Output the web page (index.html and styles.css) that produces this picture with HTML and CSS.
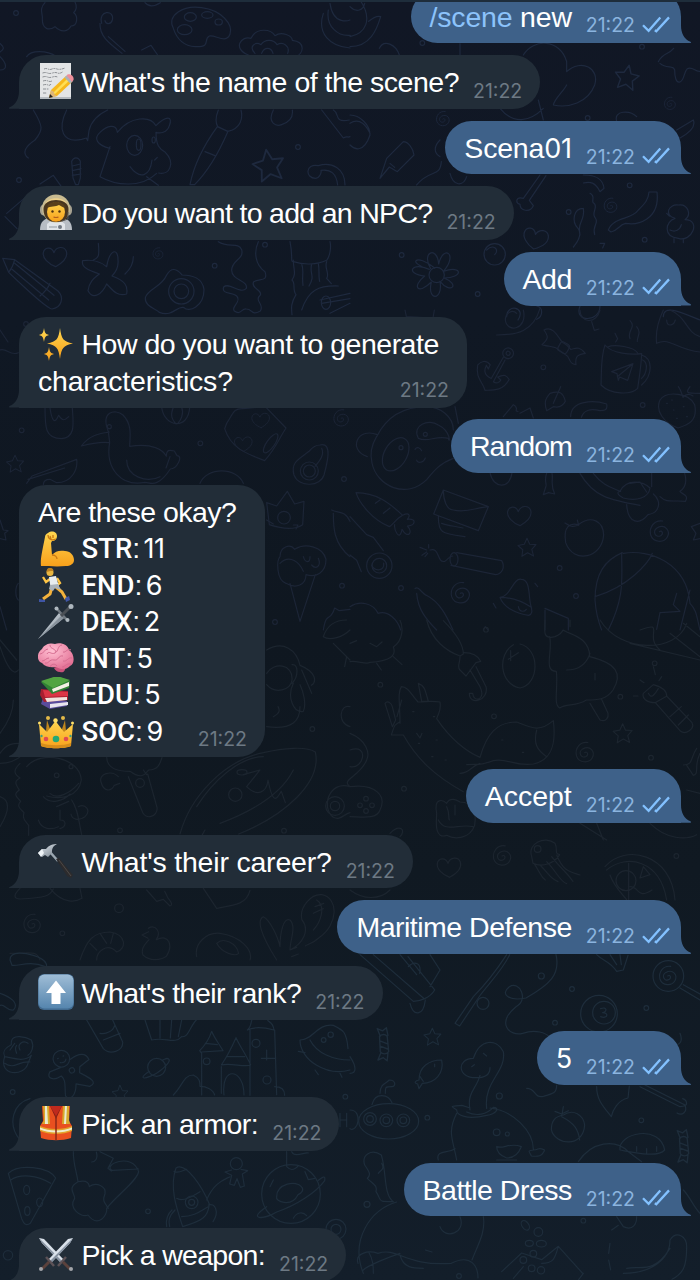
FILE: index.html
```html
<!DOCTYPE html>
<html lang="en">
<head>
<meta charset="utf-8">
<title>Chat</title>
<link rel="stylesheet" href="styles.css">
</head>
<body>
<svg class="wallpaper" viewBox="0 0 700 1280" aria-hidden="true">
  <defs>
    <path id="heart" d="M2 28C-20 20-38 2-35-14c3-16 24-20 32 0C4-34 28-34 34-18 40 2 20 18 2 28Z"/>
    <path id="star" d="M0-30 9-10 30-9 16 7 22 29 2 18-17 30-14 8-30-6-9-10Z"/>
    <path id="swirl" d="M-2 0c8-6 14 6 4 12-16 8-26-14-10-24C16-24 32-2 22 16 12 34-20 34-28 10-34-14-16-36 8-32"/>
    <circle id="dot" r="7"/>
    <path id="candy" d="M-10-22c8-6 14-6 20 0l4 40c-6 8-16 8-22 0ZM-8-22l-8-20 14 6 10-8 4 20M-6 20l-8 20 14-6 10 8 2-20M-9-10 11-2M-8 4 13 12"/>
  </defs>
  <g class="ink ink-top" transform="scale(.33333)">
    <path d="M135 8c-20 20-5 35-8 50 0 30 20 35 38 22 20 20 40 14 48-2 20 0 22-30 8-40 12-12 8-24 4-32M305 70c-12-40 40-42 32-10-4 14-20 14-22 2M300 70c-2 40 30 62 66 90M325 110l50 44"/>
    <path d="M520 85c-20-40 30-70 85-62 60 8 95 50 85 80-12 30-45 0-62 5-20 10 8 34-42 32-34-2-56-24-66-55Z"/><ellipse cx="571" cy="51" rx="18" ry="13"/><ellipse cx="622" cy="45" rx="17" ry="10"/><ellipse cx="554" cy="89" rx="22" ry="15"/><ellipse cx="656" cy="66" rx="11" ry="9"/>
    <path d="M745 165c-50-20-20-60 8-50 16-34 60-28 72-8 20-14 52 0 52 14 40 4 36 40 8 50M765 160c-20-20 0-36 18-26 12-18 38-16 48 0 18-10 40 4 32 26M785 160c8-20 28-20 34 0M425 150l28-14 22 32M80 170c12-20 60-20 90 0M970 40c-20 60 20 100 80 104M985 30c-8 50 30 80 66 76M990 10c10 70 60 50 60 50M435 8c12 14 30 10 46 0"/>
    <path d="M100 330c30 50 30 60 5 90-30 20-40 40-20 54M200 330c-30 60-10 100 45 88l14-4 4 8 4-30c8-34 30-50 56-62"/>
    <path d="M330 445c-40-10-50-30-30-48 20-20 50-28 52 0 40-50 100-50 116-20 30-30 52-30 40 0-6 22-30 24-40 20 0 40 10 50 28 60 30 30 14 70-20 62M330 440l-30 90M300 530c50 28 124 34 170-10M390 500c30 40 60 30 66-20M440 530l35 26M464 480l8-8"/><ellipse cx="404" cy="436" rx="24" ry="30"/><ellipse cx="416" cy="434" rx="7" ry="17"/><ellipse cx="461" cy="420" rx="5" ry="9"/>
    <path d="M655 330c-8 20-10 36-2 50l30 14c40-8 46-40 40-64M652 380l32 14c-30 70-60 120-100 160h-14c14-70 50-130 82-174M615 455l30 12M820 330c-20 40 10 50 25 44 30-10 34-30 32-44M965 330l65 84c14-8 10 0 20-4M1000 330c20 10 0 40 48 30M0 130c16 14 10 20 0 26M0 170c20 20 24 40 0 40"/>
    <use href="#star" transform="translate(805 495) scale(1.55) rotate(-8)"/><path d="M1035 555c0-50-40-70-80-58-40-8-40 38-8 38 12 0 18-18 16-24 30-4 46 10 50 44M120 552l40-26 30 42M20 640l70-60M15 650l36 36"/>
    <path d="M215 484c6-14 20-14 26 0v50l-6 20h-8l-8-20zM217 498l24-6M217 512l26-6M217 526l26-4"/>
    <path d="M8 775l36 4 130 94c20 20 10 50-18 54-16 0-130-110-130-110Zm36 4c-4 20-10 28-18 38M44 790l118 96M36 808 146 900M150 850c-8 20-20 30-30 38"/>
    <use href="#heart" transform="translate(165 772)"/><use href="#swirl" transform="translate(475 761) scale(.55)"/>
    <path d="M295 730c4 40 0 44-15 50M400 770c0 20-12 40-25 52M320 800c8-50 34-60 34-20 2 20-8 38-18 48 40 14 48 30 44 54-30 8-40-10-60-30-14 30-40 50-56 20 4-30 22-40 34-50-30-10-56-20-50-40 30-4 50 0 72 18Z"/>
    <path d="M500 825c14-24 30-20 46 0 30 0 62 10 66 44 0 50-46 70-60 54-20-8-34 30-74 14-10-12-44-16-42-44 8-28 48-30 64-68Z"/><circle cx="544" cy="874" r="38"/><circle cx="544" cy="874" r="22"/>
    <path d="M655 725c30 20 60 0 70 24 8 30-30 30-30 62 0 30 50 30 44 54-18 20-50-20-68-4-8 24 30 14 40 28 14 20-20 30-8 44 20 14 20-8 36-6 20 0 14 22 42 6 14-20-20-30 0-48 8-14-30-20-20-40 20-10 44 0 34-30-30-20-34-60-20-90M870 725c10 50 0 60 10 60 30 10 70 10 100-4 10-12 14-40 10-56M880 780c0 30 10 40-4 60 12 10 0 30 12 44-16 26-14 40-12 60M980 785c-8 20 10 36 0 50l14 16M905 792c8 20 0 34 4 64M935 792c-8 30 12 34-8 66M955 790c4 20 0 40 4 54M905 930c20-60 50-74 110-72M960 900l90-20M965 910l85-14M990 940l60-30"/><ellipse cx="978" cy="908" rx="14" ry="20"/>
    <use href="#dot" x="48" y="39"/><use href="#dot" x="57" y="540"/><use href="#dot" x="894" y="441"/><use href="#dot" x="795" y="734"/><use href="#dot" x="644" y="797"/>
  </g>
  <g class="ink ink-top" transform="translate(350) scale(.33333)">
    <path d="M30 0c40 60 16 100-30 110M0 20c20 20 40 10 44-10M0 140c60 0 80-50 92-90-10-4-24 4-36 14M88 145c14-30 50-10 60 20M330 165v-34M520 165c30-50 110-50 130 20v30c44-40 100-10 84 40-20 54-80 70-124 60 4-20 30-40 40-60M565 300l15 60M450 325c40 50 90 40 130 0M860 350c-20-20-70-20-60 14M980 390l50-30c8 20-14 40-40 54M925 185c14-28 30-20 46-40M930 190c20 18 40 4 44 20 0 20 4 40 16 36 14-6 10-28 22-40 16-8 22 10 38 8"/>
    <use href="#star" transform="translate(830 231) scale(1.2) rotate(12)"/><use href="#swirl" transform="translate(961 311) scale(.6)"/><use href="#swirl" transform="translate(280 357) scale(.7)"/>
    <path d="M90 535l20-60 50-50c14 0 30 20 32 40l-50 50-24-14ZM120 490l14 12M0 345c30 0 60 30 60 60-20 60-50 40-60 30M0 370c30-20 50 10 60 30M270 420c-20 20-18 40 0 50M200 555c40-50 70-20 74-70M570 525l-50 70c-24-6-24 14-10 18 0 20 30 26 40 4l-12-16 50-74M300 520c10 40 40 40 50 10"/>
    <path d="M700 525c50 0 60 20 62 40l-12 10c-14-30-30-30-50-26M720 580c20 10 0 24 12 30 14 10-10 30 4 44 12 16-10 20-2 50M700 625c-30 0-36 40-16 60 14 18-4 44-14 56M700 625c6 40-20 40-10 80M775 690c14-40 70-30 90-60 20-20 30-30 32-54h24c10 84-60 100-94 94-20 4-20 20-44 26Z"/>
    <use href="#swirl" transform="translate(783 617) scale(.7)"/><use href="#heart" transform="translate(556 718) rotate(14) scale(1.05)"/><circle cx="434" cy="763" r="32"/><path d="M410 750c20-20 40 0 24 14"/>
    <path d="M985 615c30-4 40 30 20 44 50 0 20 70-20 56-46-4-40-50-10-60-34-8-20-44 10-40ZM950 640l8 8M960 690c16 8 30 0 34-16M972 716v12M1000 716v12"/>
    <circle cx="260" cy="825" r="23"/><path d="M242 806c-30-50 20-70 24-14 14-60 60-30 14 22 60-20 60 20 2 20 50 20 20 50-12 10 10 60-40 60-26 2-40 40-60 14-20-18-60-6-40-44 14-20-70-20-40-50 16-4 38 12 42 28ZM215 950c-4-30-20-60-60-66 0 30 20 50 56 60 8-20 50-40 70-26-20 26-50 30-70 28M248 892c0 20-20 30-26 50M0 900c40-10 60-40 80-40 20 4 16-20 50-14-10 40-60 30-80 60l-50 14M0 740c14 0 10 50-4 70M30 780l30-14-20 66M0 725h35"/>
    <path d="M470 950c0-40 60-30 34 10M560 918c20 4 20 30 0 40M690 918c-20 50 60 50 60 0M940 950c0-40 60-10 110 10M750 730h14l-6 14"/>
    <use href="#dot" x="217" y="129"/><use href="#dot" x="876" y="140"/><use href="#dot" x="713" y="354"/><use href="#dot" x="884" y="719"/><use href="#dot" x="155" y="765"/><use href="#dot" x="383" y="882"/><use href="#dot" x="656" y="636"/><use href="#dot" x="839" y="556"/>
  </g>
  <g class="ink ink-upper" transform="translate(0 310) scale(.33333)">
    <path d="M135 292c0 60 0 94 50 94 44-4 34-50 32-92M150 294c6 40 14 50 26 22 14 20 18 14 30 4M485 292c8 60 80 70 84 0M520 292c-12 30 0 40 8 50M545 292c8 20-4 40-10 46"/>
    <path d="M325 365c-24-60 20-70 44-50 30 30 20 70 20 94 70-10 100 10 110 30 0-20 10-20 24-16l8 14c20 0 0 40-20 40-40 60-60 40-76 40-70 14-120-40-106-120ZM328 366c-30 4-60 10-84 42 30-8 60-14 84-10M380 450c0 50 60 70 100 50M510 440l-12 34"/><circle cx="328" cy="350" r="6"/>
    <path d="M80 520l16-22 134-50c4 30-14 70-60 70l-20-10c-20 0-20 14-20 16M84 508l110-34M680 340c20-30 20-46 50-44l66-6 62 64c-20 30-30 60-64 98-50-20-100-34-120-96Z"/><use href="#heart" transform="translate(782 332) scale(.75)"/><use href="#heart" transform="translate(730 403) scale(.75)"/><ellipse cx="812" cy="400" rx="12" ry="34" transform="rotate(35 812 400)"/>
    <use href="#swirl" transform="translate(1025 325) scale(.8)"/><use href="#star" transform="translate(45 461) scale(.85)"/>
    <path d="M960 405c40-10 20 60 12 90-10 34-74 40-90 0-12-40 20-50 46-72 10-12 20-18 32-18ZM965 415c10 20-8 40-20 54"/><circle cx="928" cy="483" r="27"/><circle cx="928" cy="483" r="18"/>
    <path d="M600 520c20-50 110-50 130 0M800 578l30 10 32-44 22 38 28-8-4 70c-30 20-70 10-100 0Z"/><circle cx="852" cy="623" r="19"/><path d="M880 645h14l-6 12M800 630l20 12"/>
    <path d="M840 740c0-30 30-40 44-22 30-20 84-10 94 30 0 40-30 56-60 46 0 30-30 44-60 26-30-10-28-70-18-80ZM870 820l30 114 46-140M840 760c30-30 60 0 70 24M910 740c6 20 20 20 20 0M935 765c12 14 30 4 20-20"/>
    <path d="M0 120c20-8 30 20 55 8M0 60l24 36M0 630l10 30 14 2-10 8 4 20-18-4M0 890l20 70M55 820c-10 10-10 40 0 50M995 600c20 10 40 0 55 34M1000 610c0 40 0 90 50 130M970 960c10-60 20-20 34-66l14 8 32-4"/><use href="#dot" x="65" y="361"/><use href="#dot" x="601" y="400"/><use href="#dot" x="1032" y="507"/><use href="#dot" x="1026" y="827"/><use href="#dot" x="825" y="936"/><use href="#dot" x="78" y="42"/>
  </g>
  <g class="ink ink-upper" transform="translate(350 310) scale(.33333)">
    <path d="M440 75c60 0 110-10 130-80M520 0c14 60-50 70-54 30 0-20 20-34 34-20M165 0l4 20 80 4 4-24M690 0c0 40 50 44 60 0M725 35l8 26 14-4M940 0c-14 30-24 70-20 100 40-20 60 20 130 26M950 30c0 20 20 20 26 0M960 0c50 20 50 70 90 80"/>
    <path d="M636 96c-14-20-30-50-54-36 14 20 14 26-6 44 30 10 34 0 54 18l14 10c20 10 10 30 34 32-4-30 10-30 28-34-20-24-30-14-44-12-10-14-14-14-26-22Z"/><rect x="626" y="98" width="30" height="30" rx="8" transform="rotate(30 641 113)"/>
    <g transform="translate(440 180) rotate(25)"><circle cx="10" cy="-60" r="16"/><circle cx="10" cy="-60" r="6"/><path d="M2-44-4 30c-30 0-30-20-30-30l10 8v-14c-20-10-30 4-34 16 10 40 36 40 52 60 20-10 50-20 52-60-12-8-20-10-34 8l12 4c0 10-8 16-18 14l4-74"/></g>
    <path d="M765 105c-14 40-10 90-12 120 30 30 90 30 110 10 4-30 10-60 12-104-30 4-90 0-110-26Zm8 6c20-10 80 0 90 18M875 135c34 10 34 60 0 90M878 150c20 10 10 44-4 56M785 185l64-24-16 50-24-10-4 10-4-20ZM802 200l46-38M795 70l8 16-6 10M840 32c20 20-10 30 0 54M860 50c16 20 0 30 2 44"/>
    <path d="M930 270c20-30 90-20 104 14 10 50-20 60-50 70-40-14-70-50-54-84ZM985 230c8 10 10 20 14 32 8-10 20-10 30-4M1020 230c-14 20-10 20 30 20"/><path d="M950 280h2M970 300h2M1000 290h2M980 325h2M1010 320h2M965 270h2"/>
    <path d="M600 250c30-10 40 0 46 24-8 16-20 20-36 16l-20 12c-10-30 0-40 10-52ZM610 280l22-50M662 320c0-50 70-50 108-38 4 20-8 20-20 20-30-8-50 0-56 20M460 320l30-36c20 10 0 20 14 20M510 310l30-16 10 30"/>
    <path d="M80 380c30-60 80-90 150-90 40 0 80 30 80 70M325 340l-10-50M310 445c-40 14-60 40-80 64-60 60-150 20-164-50-10-40 8-70 14-80M52 440c-60-20-30-90 30-66"/><ellipse cx="137" cy="433" rx="34" ry="54" transform="rotate(30 137 433)"/><path d="M205 385c-20-40 30-60 60-40 40 20 34 60 30 40-40-10-60 14-90 0ZM200 450c0 10 20 10 26-6M195 418c6-10 16-4 20 4"/><circle cx="153" cy="413" r="6"/><circle cx="226" cy="373" r="6"/>
    <path d="M18 548c60 0 100 30 140 68-20 10-30 30-40 34-50-20-90-70-100-102ZM158 616c20-10 24 0 14 12 30-4 24 20 0 20 20 20 0 40-16 10-8 40-24 0-22-14M90 570l-14 10M100 610l20-16"/>
    <path d="M280 540l135 50-30 72-134-50ZM280 540c0 30 10 60 30 60 40 10 70-8 105-10M265 620c0 50 10 50 80 60M275 640c20 8 40 8 64 14M420 488c10 50 60 50 66 0M590 490c-8 20 0 30-2 38l-8 26 16-6 18 4c-14-30-4-40-8-62"/>
    <path d="M690 490c40 70 90 80 180 96M730 490c30 40 60 44 80 54 20-40 70-30 90-10-4 30-40 40-80 30-20-10-20-20-8-20M840 520l30-4 20 30M905 530v-40M830 584c4 60 40 60 64 30 0 0 20-4 26-14 14-20 0-40-10-48M930 560c20 20 40 10 76 14 12-20-10-20-16-30 20-14 20-34 14-54"/>
    <use href="#heart" transform="translate(508 619)"/><use href="#star" transform="translate(531 712) scale(.9)"/><use href="#swirl" transform="translate(930 665)"/><use href="#swirl" transform="translate(333 850)"/>
    <path d="M685 644c40-30 74-10 76 30-4 70-90 90-114 24-8-50 14-60 38-54ZM685 645c-20 10-30 0-40-6M682 630l4 16"/>
    <path d="M320 728l135 24c12 20 0 40-18 42l-134-28M210 712l20 8M216 736l14-10M236 704v10M225 740l8-10M240 720c30-10 20 40 44 34 10-4 10-14 24-16"/><ellipse cx="312" cy="748" rx="12" ry="20"/>
    <circle cx="88" cy="767" r="38"/><path d="M0 735l20 16 14 34M0 620l50 54 20 8 30 40M65 765c8 20 40 20 36-6"/><circle cx="88" cy="767" r="22"/>
    <path d="M450 862c30 0 40-60 64-54 30 0 20 60 30 84M450 862c10 30 50 50 86 54 12-4 10-14 8-24-30-20-60-30-94-30ZM505 890c4 20 20 14 24 8M430 880l8 14M555 820l8 10"/>
    <path d="M820 730c80-14 190 30 200 150M735 870c0-80 30-120 82-142M735 860c100-30 160-100 172-130M735 870c2 30 8 60 20 90M815 728c0 80 10 130-40 232M1020 880c20 20 20 40 30 80M980 850l-10 34 20 20-60 4-10 50M1020 840l-30 120M585 895l70 30v35M585 900v60M195 836c10-10 20 14 34 20 40 20 60 60 80 104M200 850c4 50 30 80 60 110M0 890c30-20 70-10 84 20 30-10 60 20 68 50M400 960l6-10 8 10"/>
    <use href="#dot" x="580" y="172"/><use href="#dot" x="878" y="285"/><use href="#dot" x="629" y="774"/><use href="#dot" x="678" y="858"/><use href="#dot" x="153" y="834"/><path d="M1050 640l-26 10 14 20-8 20 20-4"/>
  </g>
  <g class="ink ink-lower" transform="translate(0 620) scale(.33333)">
    <path d="M970 50c10-30 30-50 70-50M970 50c20 14 60 0 80-20M1000 70l50 50M1040 110l-6 30M800 90c50-30 90 0 100 46 50 20 50 50 34 60M800 160c20-34 80-30 76 20-4 30-50 44-76 14M876 190c20-20 20-60 0-56M880 190c-20 40 0 90 30 84 10-20 0-60-10-80M905 150l30 70M800 320c80 10 100-20 100-60M820 290c20-10 20-20 14-30M1050 260c-30-10-40 50 0 60M0 80c20 60 40 90 55 70M0 60l50 60M40 240c0 30-10 60-40 100M0 400c20-30 40-30 60-30M0 430c30 0 50-10 66-24M0 530c30 10 30 40 0 90"/>
    <path d="M60 430c-20 20-20 30 0 44-20 10-12 20-2 36-20 14-8 20 4 34-14 14 0 24 10 34-6 20 6 26 14 38v30M80 440c40-50 160-30 164 40-8 50-60 60-104 48M150 520c20 20 60 0 86-30M130 530c20 24 60 14 80-8M215 540c20 30 20 60 30 104M170 560l36-16M235 560c20-10 40 10 20 30-20 14-40 8-42-8M115 600c10 30 40 30 60 20M180 570v30c20 0 20 20 0 26"/><circle cx="170" cy="466" r="7"/><circle cx="213" cy="440" r="6"/>
    <path d="M320 410c0 40 40 44 70 44 40 30 50 0 56-4 30 0 34-20 40-38M355 470c-20-20-60-10-52 16 8 30 30 30 40 10l16-6M385 470l40 100c10 34 50 20 46-8l-28-100M430 450l10 14"/><circle cx="420" cy="489" r="13"/>
    <path d="M540 642c30-110 130-220 250-244 60-14 130-20 156-2 20 90-90 190-230 246M590 560c50-80 130-150 200-150M660 610c80-30 180-80 220-160M740 500l40-50-50 14M740 500c30 30 60 20 64-20 12 60 20 70 40 34l12 34M615 630l-8 14"/><circle cx="706" cy="524" r="20"/><ellipse cx="726" cy="457" rx="15" ry="8"/>
    <path d="M1050 500c-60-20-90 60-50 92 20 10 30-8 50-14"/><circle cx="1005" cy="558" r="28"/><circle cx="1005" cy="558" r="14"/>
    <path d="M60 805c-20 20-20 30 0 32 80-4 90-10 100-30M150 805c40 50 80 40 96 30l-6-30M440 810l30 34 20-6 20 20c10-4 4-10-6-24l-10-20M610 805l40 60c60-10 90-14 100-54"/>
    <use href="#swirl" transform="translate(98 912) scale(.9)"/><circle cx="357" cy="865" r="13"/><use href="#dot" x="187" y="940"/><use href="#dot" x="360" y="631"/><use href="#dot" x="852" y="632"/><use href="#dot" x="937" y="327"/>
    <path d="M240 1020c20-60 40-84 90-84 50 8 50 50 20 60-30-30-60 0-60 24M300 940l20 30M340 940l-8 30M270 970l20 20M445 925c20-14 40 10 24 34 40-20 50 20 30 50-20 14-50 14-70-4-8-20 8-34 18-46M446 935l-20 10 18 10M590 1010c-8-40 30-74 70-70 60 8 100 50 90 80M650 970c20-20 60 0 66 30-10 10-50 0-66-30M830 1020c-50-80-60-120-40-130 20 10 44 60 50 90M840 980c0-40 10-90 30-80 20 20 0 60 0 90 40-20 60-60 36-90-10-40 30-80 60-76 50 10 50 90-10 130-20 20-40 20-40 24M950 840c30 20 10 70-10 90M945 860l26-10M940 880l30-14M870 990l20-8M875 1010l20-8M30 1000c60 0 80-10 90 20"/>
  </g>
  <g class="ink ink-lower" transform="translate(350 620) scale(.33333)">
    <path d="M0 125c20-4 50 10 60 2 60-4 80-20 70-46 30-20 30-60 20-80M60 70l20 10 16-14M0 70l20-8M80 130l14 20M130 110l26 24M230 0c14 60 60 94 100 108l10-6c0-30-30-70-60-100M330 110c0 20-10 30 0 40l18 18 30-40 14-4c-10-20-30-26-50-26M360 150l30 50c20 40-20 50-22 20h-10c0 40 60 20 50-20l-30-60M510 72c60 14 60 120 0 132-60-10-70-100-20-130M475 118l30-20M482 92v30"/>
    <path d="M585 0c0 30-10 60 30 50 10-4 20-10 24-20 20 14 80 20 80 80 80 20 100 50 70 100-20 30-50 30-80 30-30 20-60 10-80 24-20-10-4-60-10-110-40 0-10-60-20-104M660 0v20M650 150c40 0 60-20 70-50M720 250l30 50c20 8 26-10 24-20l-20-44M735 160v20"/>
    <path d="M750 0c60 100 230 100 260 10M840 70l210 50M870 30c80-30 10 20 60 60M960 40l90 70M1000 10l50 40M880 220l30-26c30 8 40 20 40 34l76 80c10 20-20 36-34 26l-76-86c-30 0-40-16-36-28ZM915 248l36-20M960 290l34-30M985 315l30-30M895 220c10 20 20 0 30-14M910 140l6 24M870 180l12 8M850 228h14M935 170l-8 12"/>
    <path d="M150 310c0-60-8-90 4-110 20 0 30 24 50 46 10 0 40-4 66 0 4 30-4 30-10 50 40 60 90 100 130 116 20-70 50-106 110-106 50 20 70 30 110-4 10 80-10 120-60 130-60 8-80-20-120-10-40 14-40 10-80 12M124 345c10-30 8-30 26-40M124 345l36 0c40 70 90 120 180 170M105 250c8-10 20 0 22 10l10 40-10 20ZM205 190c20 8 20 20 30 54h-20ZM200 340l10 14 6-14M155 240l-14 50M560 330c-10 40 0 60 30 80M330 460c30 0 30-20 60-30"/><path d="M188 275h4M250 290h4M258 360h4M205 370h4M285 420h4M455 360h4M517 397h4M245 410h4"/>
    <use href="#star" transform="translate(818 340) scale(.95)"/><use href="#swirl" transform="translate(706 398) scale(.95)"/><use href="#swirl" transform="translate(458 708) scale(.95)"/><use href="#heart" transform="translate(297 744)"/>
    <path d="M0 340c50 20 60 60 50 80-20 50-80 60-50 80 80-10 110 30 90 70-10 30-60 20-90 20M0 390c60-20 40 60 0 50"/><circle cx="48" cy="536" r="7"/><circle cx="30" cy="556" r="7"/><circle cx="48" cy="573" r="7"/><circle cx="66" cy="556" r="7"/>
    <path d="M260 580c-10-50 20-40 30-30 10-20 30-10 40-4 40 0 50 30 44 70-14 40-60 44-84 30-40 14-30-50-30-66ZM265 600c20 40 60 10 104 20M290 560c10 20 4 30 8 40M315 555v30M120 640c30-30 50-10 30 10M0 810c40 30 90 30 120 0"/>
    <path d="M545 710c-14-40 40-64 70-40 10 20-4 30 14 34-14 24-50 40-80 26ZM552 730c20 30 20 40 34 50M570 735c30 30 30 40 54 50M590 725c30 30 40 60 60 66M605 710c30 40 40 40 64 74M620 705c20 50 40 50 70 60"/><circle cx="563" cy="687" r="10"/>
    <path d="M765 740c60-70 200-40 210 100M770 750c60-50 160-30 180 90M780 765c10 30 30 50 50 74M836 730v110M880 740l-10 34 30-10ZM840 800c30 0 20 40 66 10M690 610l80 50M740 610l20 50M900 610c50 50 110 50 140 34M1000 435c30 0 20-20 40-50M1050 400c-20 40 0 60-20 66l-20-30M1010 510l40 10"/><circle cx="828" cy="782" r="30"/>
    <use href="#dot" x="408" y="29"/><use href="#dot" x="91" y="194"/><use href="#dot" x="432" y="289"/><use href="#dot" x="903" y="413"/><use href="#dot" x="162" y="506"/><use href="#dot" x="979" y="708"/><use href="#dot" x="811" y="230"/><use href="#dot" x="914" y="130"/>
  </g>
  <g class="ink ink-bottom" transform="translate(0 950) scale(.33333)">
    <path d="M30 30c0-30 50-20 70-14 50 14 40 40 36 34-50-20-80 0-100-4ZM0 130c30 10 60 30 40 50-20 4-26-20-40-14M260 210l50 86c20 20 60 8 58-20l-30-66M300 250c20 4 40-8 44-24M310 270l50-20M435 210l20 60c40-10 70 14 90-10 20 4 24-30 44-50M480 210v54M515 210l-4 54M545 210l-10 50"/>
    <path d="M14 320c-20 60 60 60 70 20l10-24c-20 20-50 10-80 4ZM14 320c-10-20 8-30 20-36-4-40 50-20 60-14 10 20 0 40-10 46M30 300l14-20M60 300c-10-20 10-30 24-20M50 310c-4-10-4-20 0-24M14 340c30 20 40-8 76-4"/>
    <g transform="translate(214 362) rotate(-25)"><circle cx="-12" cy="-45" r="25"/><path d="M-26-22-60-24c-20 14 0 30 26 26 8 20-4 30-14 60 8 20 30 10 44-20l34 24c30 0 10-24-10-50l8-16 34-8c0-24-20-30-50-24M-22-50h2M-4-50h2M-20-36c8 6 16 4 20-2"/><circle cx="2" cy="0" r="8"/></g>
    <circle cx="470" cy="352" r="27"/><path d="M448 364c-30 20-20 24 0 16 30-10 60-40 60-50-4-8-10-4-20 0"/>
    <path d="M605 435V310l-6-8c20-20 30-40 36-58 8 20 20 34 34 58l-64 4M616 280l36 4M664 350v80M664 345c20-30 30-50 44-82 14 30 30 50 44 82-20 8-60-8-88 0ZM680 320h54M742 240c20-10 50-8 80 0-4-30-20-20-20-34M742 240c14-10 10-30 16-34M750 240v196M824 240l6 194M672 435c-10-90 60-80 60 0M520 435c30-30 30-60 60-60 20 10 20 20 20 34 20 0 40 10 44 26M824 410c20 0 30 10 30 26M784 325h40M800 300v30"/><circle cx="620" cy="334" r="10"/><circle cx="768" cy="280" r="12"/><circle cx="801" cy="390" r="12"/>
    <path d="M900 270c40 0 50-50 100-44 30 14 40 20 44 70M900 270c0 60 80 110 150 90M930 270c20 40 70 60 120 60M895 304l20 4M945 360l10 14M1020 370l6 12"/><circle cx="992" cy="254" r="8"/><circle cx="971" cy="270" r="7"/>
    <use href="#star" transform="translate(360 430) scale(.8)"/><path d="M60 570c-40-50-20-110 30-124M1020 490v40M1040 490v40M1020 510h20"/>
    <path d="M25 670c30-30 120-20 142 14l-76 136c-14 10-20 0-26-14ZM32 690c30-20 80-14 120 10"/><ellipse cx="80" cy="720" rx="9" ry="14"/><ellipse cx="119" cy="757" rx="9" ry="13"/><ellipse cx="82" cy="783" rx="8" ry="13"/>
    <path d="M220 605c0 40 10 60 14 90-34 20-10 34-10 50-20 30 20 60 40 50 30 40 60 0 56-20 30-40 90-80 96-110-20-60-110-20-80-4l80-4M235 695c40-8 30 20 34 14 20-14 50 0 46 22-8 20-4 24 10 44M275 636c10 0 20-10 14-30M300 605l40 20-16 30 10 8"/>
    <path d="M548 830c-20-60-40-120-20-176 30-20 80 60 100 108-4 40-20 50-80 68ZM522 664c10 8 30-4 38-6M530 745c20 14 60-14 70-20M545 800c40 0 60-20 80-30M525 780c-20 20-20 34-16 50M500 830c-4-20 4-40 16-50M625 765c20-8 34 20 14 50M620 750c20-50 50-60 70-70"/><circle cx="575" cy="757" r="19"/><circle cx="575" cy="757" r="9"/><circle cx="709" cy="641" r="18"/><path d="M695 660l-20 6 20 10-6 26 14 4 8-20 10 26 12-4-6-36 16-10-20-4"/>
    <circle cx="873" cy="732" r="88"/><path d="M830 740c0-40 60-50 74-30 10 10 0 20-10 24-20 40-70 20-64 6ZM800 770c-60 40-10 40 30 16 60-20 120-60 144-94 4-20-10-8-20 0M860 650c10 10 20 14 36-4M820 690l-10 20M915 665l10 24 20-4M880 805c10-20 30-20 40-8M860 648V605M875 605c10 20 40 0 50 4"/>
    <circle cx="24" cy="916" r="14"/><circle cx="1008" cy="838" r="30"/><circle cx="1008" cy="838" r="15"/><use href="#dot" x="38" y="426"/><use href="#dot" x="444" y="784"/><use href="#dot" x="1036" y="440"/>
  </g>
  <g class="ink ink-bottom" transform="translate(350 950) scale(.33333)">
    <path d="M30 14l160 140c20 0 50-10 64-34l-80-100M70 14l150 130M180 160c10 40 40 40 46-10M150 14l50 60M240 14l30 46-30 50M175 50c20-20 40-10 34 20M470 14C440 60 400 110 370 140L315 220l14 8 60-90c30-40 70-80 90-124"/><circle cx="399" cy="160" r="18"/>
    <path d="M618 14c14 60-20 90-90 130-50 10-80-10-50-34 30-20 60 40 20 60-60 50-20 90 20 80 40-14 70 0 80 10"/><circle cx="574" cy="78" r="9"/><path d="M740 14c20 20 40 20 60 50l20-4 14-44M780 14l20 30M810 14l4 30"/><use href="#swirl" transform="translate(955 78) scale(.9)"/><circle cx="955" cy="78" r="46"/><path d="M990 114l60 36M1000 104l50 28"/>
    <circle cx="747" cy="191" r="55"/><circle cx="762" cy="188" r="34"/><path d="M752 176c20-8 20 10 6 12 20 0 14 20-6 12"/>
    <use href="#candy" transform="translate(100 284) scale(1.15)"/><use href="#candy" transform="translate(1000 590) scale(1.15)"/><use href="#star" transform="translate(247 260) scale(.85)"/>
    <path d="M275 330c8 40-20 70-58 70l-10 16-4-14c-14-4-6-10 4-12 0-40 30-60 68-60ZM210 380l10 14M254 342v8"/>
    <path d="M370 325c20-60 70-60 90-20 10 60-60 90-50 170M390 376c-10 40-40 50-30 104M370 325c-50 0-50 60 10 58 30 0 40-14 40-30M320 480c-20-14-20-10 16-14l24 8M350 486c30 14 60 8 80-14 20 0 10 20-20 24-60 14-90 0-90-16M320 490c-30 60-10 80 0 140M420 474c70 8 130 70 130 124M265 630c-10-30 30-20 50-34M550 600c20 0 10-10 34 0-8 20-20 20-40 18-10-20-10-14 6-18ZM440 590c20 8 40-14 74 0-8 20-20 34-44 34-20-8-30-20-30-34ZM440 630h60"/><circle cx="440" cy="547" r="10"/><circle cx="472" cy="552" r="6"/><path d="M400 310l10 8M365 350l8-6"/>
    <ellipse cx="116" cy="514" rx="90" ry="53"/><circle cx="60" cy="507" r="19"/><circle cx="109" cy="511" r="19"/><circle cx="160" cy="511" r="19"/><circle cx="60" cy="507" r="10"/><circle cx="109" cy="511" r="10"/><circle cx="160" cy="511" r="10"/><path d="M66 464c10-40 50-30 60-6M90 430c0-30 20-30 28-40 20 0 20 20 8 20-20 0-20 0-20 20M0 480c40 0 24 70 0 56M0 370c20 0 20-20 0-50"/>
    <path d="M130 755c-30-20-20-90-36-140-30-20-60 0-50 30 14 20 20 30 8 40 20 20 30 20 26 40 20 30 0 30 52 30ZM95 640c10 20-4 20-10 30M40 970c-40-100 20-190 100-214M24 940c-10-30 30-40 60-30 60-20 80 40 220 30 60-30 80 10 80 44M40 960c14-14 80-40 110-50M70 970c0-20 0-40-14-64M400 800c8 50-20 90-34 130M270 830c14 40 80 20 60-30M220 955c-30 0-60 0-70-40M226 900l20 6"/>
    <path d="M640 495c30-20 60 0 64 30-4 70-90 60-100 14 0-30 14-40 36-44ZM635 500c40 20 50 40 54 70M640 470l-4 24M615 484l20 8 20-10M870 410l120 60c30 0 20-20 8-24M885 405l120 60c8 20-8 34-24 24M740 410c0 40 20 60 44 90 4-20 20-50 50-56l4-36M530 415c30 0 20 30 50 24 30-8 40-10 40-34M810 600c-8-50 120-80 134 0-20 24-90 8-134 0ZM860 590v14M890 596v14M920 590v14M685 635c40-60 110-70 150-30l40 30M970 290c20-8 30-14 20-40"/>
    <path d="M455 965l60-56 60 20 50-40 72 80M520 950l-30 35M575 940c40 0 40-20 50-50M700 970l-30 40"/><circle cx="565" cy="846" r="13"/><ellipse cx="526" cy="826" rx="10" ry="16" transform="rotate(-35 526 826)"/><ellipse cx="538" cy="880" rx="12" ry="9"/><ellipse cx="574" cy="881" rx="15" ry="10"/><circle cx="550" cy="911" r="10"/><circle cx="520" cy="930" r="10"/><circle cx="545" cy="955" r="10"/><circle cx="573" cy="961" r="11"/>
    <path d="M820 970c80 0 140-40 140-100 20-30 50-10 50 20 0 60-10 80-44 98M830 955c40-10 80 20 130-60M780 880l-4 30M776 930l6 30M785 840l20-14M800 800l20 30c30 14 40-10 40-30M1000 720c20 20 30 50 50 70"/>
    <circle cx="51" cy="763" r="9"/><use href="#dot" x="666" y="117"/><use href="#dot" x="889" y="174"/><use href="#dot" x="615" y="218"/><circle cx="448" cy="438" r="9"/><use href="#dot" x="232" y="503"/><use href="#dot" x="874" y="511"/><use href="#dot" x="700" y="812"/><use href="#dot" x="327" y="978"/>
  </g>
</svg>

<svg class="defs" aria-hidden="true">
  <defs>
    <linearGradient id="yel" x1="0" y1="0" x2="0" y2="1"><stop offset="0" stop-color="#ffd650"/><stop offset="1" stop-color="#f7a01b"/></linearGradient>
    <linearGradient id="steel" x1="0" y1="0" x2="1" y2="1"><stop offset="0" stop-color="#e4ebf1"/><stop offset="1" stop-color="#76818c"/></linearGradient>
    <linearGradient id="btn" x1="0" y1="0" x2="0" y2="1"><stop offset="0" stop-color="#9fbdd6"/><stop offset="1" stop-color="#5585ae"/></linearGradient>
    <radialGradient id="pink" cx=".4" cy=".3" r=".8"><stop offset="0" stop-color="#ffbfd2"/><stop offset="1" stop-color="#e0688e"/></radialGradient>
    <symbol id="checks" viewBox="0 0 28 17"><path d="M1 9.300 6.600 14.800 18.300 1.400M12.800 14.300 14.300 15.300 27 1.400"/></symbol>
  </defs>
</svg>

<main class="chat">
  <div class="bubble out"><p class="text loose"><span class="command">/scene</span> new</p><span class="time">21:22</span><svg class="checks"><use href="#checks"/></svg></div>

  <div class="bubble in">
    <svg class="emoji" viewBox="0 0 36 36"><path d="M2 0h31v36H2z" fill="#e3e5e6"/><path d="M2 34h31v2H2z" fill="#b5bbc0"/><g fill="none" stroke="#777b80" stroke-width=".8" stroke-dasharray="3 .8 1.5 .6"><path d="M6 6q2-1 4 0t4 0 5 0 8-1M4.500 10q3-1 5 0t5 0 5 0 5-1M4.500 14q3-1 5 0t5 0 5 0M5 18q3-1 5 0t4 0M5 22q3-1 5 0t3-1M5 26h6M5 30h4"/></g><path d="m11 35 2-8L28 13l6 6-15 14Z" fill="#f6b81d"/><path d="m15 30 15-15 2 2-15 14Z" fill="#ffdf55"/><path d="m11 35 2-8 2.500 1.500 1 3 2.500 1.500Z" fill="#ddb67a"/><path d="m11 35 1-4 3 3Z" fill="#222"/><path d="m26.500 14.500 2.500-2.300 5.700 6-2.500 2.200Z" fill="#aab2b8"/><path d="M28.500 12.500c2-3 8 0 7 4.500l-1.500 2Z" fill="#ee8f9a"/></svg>
    <p class="text">What's the name of the scene?</p><span class="time">21:22</span></div>

  <div class="bubble out"><p class="text loose">Scena<span class="digits">01</span></p><span class="time">21:22</span><svg class="checks"><use href="#checks"/></svg></div>

  <div class="bubble in">
    <svg class="emoji" viewBox="0 0 36 36"><path d="M2 36c0-9 5-12 11-12h10c7 0 11 4 11 12Z" fill="#b7bdc4"/><path d="M9 36v-6l5-4h8l5 4v6Z" fill="#e0e4e8"/><rect x="2" y="10" width="32" height="12" rx="5" fill="#a7a291"/><circle cx="18" cy="14.500" r="14" fill="#c8bb91"/><path d="M7 11C8 2 28 2 29 11Z" fill="#ecd08b"/><path d="M5.500 15c0-12 25-12 25 0s-6 13-12.500 13S5.500 25 5.500 15Z" fill="#49361f"/><ellipse cx="18" cy="18" rx="9" ry="9.800" fill="url(#yel)"/><path d="M9 14c0-8 18-8 18 0-3-1-4-2-6-3-3 2-9 1-12 3Z" fill="#59401b"/><circle cx="14.500" cy="17.500" r="1.200" fill="#50330f"/><circle cx="21.500" cy="17.500" r="1.200" fill="#50330f"/><path d="M15.500 23q2.500 1 5 0" stroke="#b2601d" stroke-width="1.200" fill="none"/><path d="M30 18v7l-6 2" stroke="#555" fill="none"/><circle cx="22" cy="33" r="2" fill="#707881"/><path d="M11 33h8" stroke="#9199a0"/></svg>
    <p class="text tight">Do you want to add an NPC?</p><span class="time">21:22</span></div>

  <div class="bubble out"><p class="text">Add</p><span class="time">21:22</span><svg class="checks"><use href="#checks"/></svg></div>

  <div class="bubble in stacked question">
    <p class="text"><svg class="emoji inline" viewBox="0 0 36 36"><g fill="url(#yel)"><path d="M22 1c1.500 11 3 13.500 13 15.500C25 18.500 23.500 21 22 32c-1.500-11-3-13.500-13-15.500C19 14.500 20.500 12 22 1Z"/><path d="M6 1c.8 5 1.500 6 5 7-3.500 1-4.200 2-5 7-.8-5-1.500-6-5-7 3.500-1 4.200-2 5-7ZM11 20c.8 5 1.500 6 5 7-3.500 1-4.200 2-5 7-.8-5-1.500-6-5-7 3.500-1 4.200-2 5-7Z"/></g></svg>How do you want to generate<br><span class="loose">characteristics?</span></p><span class="time">21:22</span></div>

  <div class="bubble out"><p class="text tighter">Random</p><span class="time">21:22</span><svg class="checks"><use href="#checks"/></svg></div>

  <div class="bubble in stacked stats">
    <div class="text">
      <p>Are these okay?</p>
      <p><svg class="emoji inline" viewBox="0 0 36 36"><path d="M10 2c4-3 9-1 9 3 0 3-2 5-5 5l-1 2 1 12c3-4 8-5 13-4 5 0 9 4 9 9 0 4-4 6-8 6-9 1-18 0-25 0-1-7 2-18 4-29 0-2 1-3 3-4Z" fill="url(#yel)"/><path d="M10 4c0 4 3 6 8 4M12 5l1 3M15 4v3M14 24c3 0 5 2 5 4" stroke="#c97812" stroke-width="1.300" fill="none"/></svg><b>STR</b>: <span class="digits">11</span></p>
      <p><svg class="emoji inline" viewBox="0 0 36 36"><path d="m14 19-2 7-7 5M18 19l6 5 4 7" stroke="#f4b23c" stroke-width="3" fill="none" stroke-linejoin="round"/><path d="M12 11 8 14 5 9M19 10l3 5-4 3" stroke="#ffc545" stroke-width="2.300" fill="none"/><path d="m11 9 7-1 3 11-8 2-1-5Z" fill="#e9edf0"/><path d="m12 17 8-1 3 6-6-2-2 3-4-2Z" fill="#aab2bb"/><circle cx="12" cy="4.500" r="3.500" fill="#eab63f"/><path d="M8.500 4c0-6 7-5 7-1l-3 0Z" fill="#bd8120"/><path d="m1 31 6 1v2H1ZM27 30l4-2 1 4-4 2Z" fill="#3f55a5"/></svg><b>END</b>: <span class="digits">6</span></p>
      <p><svg class="emoji inline" viewBox="0 0 36 36"><path d="M0 35 21 9l5 5Z" fill="url(#steel)"/><path d="m0 35 23.500-23.500L26 14Z" fill="#87919b"/><path d="m19 5 10 11" stroke="#727a82" stroke-width="2.500"/><path d="m23 12 9-9" stroke="#4a4f55" stroke-width="3"/><g fill="#aeb7be"><circle cx="33" cy="2.500" r="2.500"/><circle cx="18.500" cy="4.500" r="2"/><circle cx="29.500" cy="16" r="2"/></g></svg><b>DEX</b>: <span class="digits">2</span></p>
      <p><svg class="emoji inline" viewBox="0 0 36 36"><path d="M18 26h9c1 4-2 6-5 5-3 0-5-2-6-4Z" fill="#c8527a"/><path d="M4 22C-2 20-1 11 4 8 7 2 14 2 17 3c6-2 13 1 14 6 6 4 6 14 1 16-5 5-10 3-14 1-5 1-11 0-14-4Z" fill="url(#pink)"/><path d="M4 20c3 0 4-3 7-3m-9-4c4 0 4-5 8-5m2-4c0 4 5 3 6 7m6-7c-5 1-3 6-7 8s-6-3-8 1m-2 9c4 1 4-4 9-3s4-5 9-4m8-6c-4-2-5 3-8 2m9 6c-4-1-5 4-9 3m-1 6c3 0 4-4 9-3m-14 2c-2-3-6-2-7 1" stroke="#d56c90" stroke-width="1" fill="none"/></svg><b>INT</b>: <span class="digits">5</span></p>
      <p><svg class="emoji inline" viewBox="0 0 36 36"><path d="m5 21-2 6 9 5 17-3v-5Z" fill="#5a4c9c"/><path d="m12 27 18-2v3l-18 3Z" fill="#e8e5ed"/><path d="m3 12-1 6 4 7 24-2V14Z" fill="#a91f30"/><path d="m5 13 2 7 23-1v-4Z" fill="#db3545"/><path d="m7 21 22-1v3L9 25Z" fill="#f0e2dc"/><path d="M3 5 19-1l13 5-1 7-17 6Z" fill="#318334"/><path d="M3 4 19-1l13 4-17 8Z" fill="#52a441"/><path d="m14 12 17-7v4l-16 6Z" fill="#f4f0e4"/></svg><b>EDU</b>: <span class="digits">5</span></p>
      <p><svg class="emoji inline" viewBox="0 0 36 36"><path d="m9 6 4 12h10l4-12 2 22H7Z" fill="#bf861d"/><circle cx="10" cy="4" r="2" fill="#e3b949"/><circle cx="25" cy="4" r="2" fill="#e3b949"/><path d="m1 10 8 8 8.500-11L26 18l9-8-2 22c-6 3-24 3-30 0Z" fill="url(#yel)"/><path d="M3 29c8 3 22 3 30 0v3c-6 3-24 3-30 0Z" fill="#d58d1b"/><g fill="#ffdf69"><circle cx="1.500" cy="9" r="1.500"/><circle cx="17.500" cy="6.500" r="2.200"/><circle cx="34.500" cy="9" r="1.500"/></g><circle cx="18" cy="25" r="3.300" fill="#24a875"/><circle cx="8" cy="25" r="2.300" fill="#e14a52"/><circle cx="28" cy="25" r="2.300" fill="#e14a52"/><circle cx="3.500" cy="22" r="1.200" fill="#42a080"/><circle cx="32.500" cy="22" r="1.200" fill="#42a080"/></svg><b>SOC</b>: <span class="digits">9</span></p>
    </div><span class="time">21:22</span></div>

  <div class="bubble out"><p class="text looser">Accept</p><span class="time">21:22</span><svg class="checks"><use href="#checks"/></svg></div>

  <div class="bubble in">
    <svg class="emoji" viewBox="0 0 36 36"><path d="m12 9 8 9" stroke="#9aa6b0" stroke-width="2.500"/><path d="m18 16 3-1 14 17-2 3-4-2Z" fill="#2c2b2d"/><path d="m21 17 12 16" stroke="#4d4947"/><path d="m0 10 4-4 4 0c3-4 7-5 11-5-5 3-5 5-5 9l-4 4-3-2-3 2Z" fill="url(#steel)"/><path d="m0 10 4-4 2 4-3 4Z" fill="#edf2f6"/></svg>
    <p class="text loose">What's their career?</p><span class="time">21:22</span></div>

  <div class="bubble out"><p class="text">Maritime Defense</p><span class="time">21:22</span><svg class="checks"><use href="#checks"/></svg></div>

  <div class="bubble in">
    <svg class="emoji" viewBox="0 0 36 36"><rect width="36" height="36" rx="6" fill="#426b90"/><rect x=".5" y=".5" width="35" height="34" rx="6" fill="url(#btn)"/><path d="M18 6.500 28 19h-5.500v11h-9V19H8Z" fill="#fff"/></svg>
    <p class="text">What's their rank?</p><span class="time">21:22</span></div>

  <div class="bubble out"><p class="text"><span class="digits">5</span></p><span class="time">21:22</span><svg class="checks"><use href="#checks"/></svg></div>

  <div class="bubble in">
    <svg class="emoji" viewBox="0 0 36 36"><path d="M9 1h18l-5 14h-8Z" fill="#8c1f16"/><path d="M4 1h8l6 13 6-13h8l-1 15 3 5-1 12c-9 3-21 3-30 0L2 21l3-5Z" fill="#e9501f"/><path d="m12 1 6 10 6-10" fill="#c02a1d"/><path d="M5 1h6l1 18-8 0 2-4ZM25 1h6l0 14 1 4-8 0Z" fill="#d7a92c"/><path d="M7 1h2l1 18H7ZM27 1h2l-1 18h-2Z" fill="#e8ead0"/><path d="M2 21c9 4 23 4 32 0v5c-9 4-23 4-32 0Z" fill="#e3a42b"/><path d="M2 22.500c9 4 23 4 32 0v2c-9 4-23 4-32 0Z" fill="#eeedcd"/><path d="M18 11v24" stroke="#8b2818" stroke-width="1.500"/></svg>
    <p class="text">Pick an armor:</p><span class="time">21:22</span></div>

  <div class="bubble out"><p class="text">Battle Dress</p><span class="time">21:22</span><svg class="checks"><use href="#checks"/></svg></div>

  <div class="bubble in">
    <svg class="emoji" viewBox="0 0 36 36"><g id="blade"><path d="m1 2 5 1 20 21-3 3L4 7Z" fill="#d9e1ea"/><path d="m1 2 23.500 23.500L23 27 4 7Z" fill="#8591a0"/><path d="m20 30 8-9" stroke="#5d5257" stroke-width="2.500"/><path d="m25 26 7 7" stroke="#5b413c" stroke-width="3"/><circle cx="33" cy="33" r="2" fill="#a2a5aa"/></g><use href="#blade" transform="matrix(-1 0 0 1 36 0)"/></svg>
    <p class="text tight">Pick a weapon:</p><span class="time">21:22</span></div>
</main>
<div class="header-edge"></div>
</body>
</html>
```
FILE: styles.css
```css
* { box-sizing: border-box; }

html, body { margin: 0; }

body {
  position: relative;
  width: 700px;
  height: 1280px;
  overflow: hidden;
  background: linear-gradient(180deg, #111725 0%, #101824 25%, #0f1720 50%, #101922 68%, #131e2a 100%);
  font-family: "Liberation Sans", Arial, sans-serif;
  color: #fff;
}

.wallpaper {
  position: absolute;
  inset: 0;
  width: 700px;
  height: 1280px;
}

.ink {
  fill: none;
  stroke-width: 3.6;
  stroke-linecap: round;
  stroke-linejoin: round;
}

.ink-top { stroke: #1e293e; }
.ink-upper { stroke: #1c2536; }
.ink-lower { stroke: #1c252f; }
.ink-bottom { stroke: #1e2d3b; }

.defs { position: absolute; width: 0; height: 0; }

.header-edge {
  position: absolute;
  inset: 0 0 auto;
  height: 2px;
  background: #1e2d3b;
}

.chat {
  position: relative;
  display: flex;
  flex-direction: column;
  align-items: flex-start;
  gap: 11.9px;
  margin-top: -10.5px;
  padding: 0 19px;
}

.bubble {
  position: relative;
  flex: none;
  display: flex;
  align-items: flex-end;
  min-height: 53.7px;
  padding: 9px 18px 8.3px 19px;
}

.bubble::after {
  content: "";
  position: absolute;
  bottom: 0;
  width: 11px;
  height: 18px;
  background: inherit;
}

.in {
  background: #222d38;
  border-radius: 27px 27px 27px 0;
}

.in::after {
  left: -10px;
  clip-path: path("M11 0H10C10 8 7 14 .5 16.500C-.5 17.500 0 18 1.500 18H11Z");
}

.out {
  align-self: flex-end;
  padding-right: 11px;
  background: #3e6189;
  border-radius: 27px 27px 0 27px;
}

.out::after {
  right: -10px;
  clip-path: path("M0 0H1C1 8 4 14 10.500 16.500C11.500 17.500 11 18 9.500 18H0Z");
}

.text {
  margin: 0;
  font-size: 28.5px;
  line-height: 36.4px;
  letter-spacing: -.5px;
  white-space: nowrap;
}

.text p { margin: 0; }

.loose { letter-spacing: -.2px; }
.looser { letter-spacing: 0; }
.tight { letter-spacing: -.7px; }
.tighter { letter-spacing: -1px; }

.text b {
  font: 500 27.5px/1 Roboto, sans-serif;
  letter-spacing: 0;
}

.digits {
  font-family: Inter, sans-serif;
  font-size: 27px;
  line-height: 1;
}

.stats .digits { margin-left: -3.5px; }

.command { color: #8cc3fb; }

.emoji {
  flex: none;
  align-self: flex-start;
  width: 36px;
  height: 36px;
  margin: -1px 7.5px 0 0;
}

.emoji.inline {
  display: inline-block;
  margin: -4px 7.5px -4px 0;
  vertical-align: -5px;
}

.time {
  margin: 0 0 -.5px 14px;
  color: #6d7984;
  font: 400 19.500px/20px Inter, sans-serif;
  letter-spacing: 0;
}

.out .time { color: #8bb4df; }

.checks {
  width: 28px;
  height: 17px;
  margin: 0 0 2px 7px;
  fill: none;
  stroke: #83c1ff;
  stroke-width: 2.300;
}

.stacked { display: grid; }

.stacked > * { grid-area: 1 / 1; }

.stacked .time { place-self: end; }

.question { width: 448px; }

.stats { width: 246px; }
```
